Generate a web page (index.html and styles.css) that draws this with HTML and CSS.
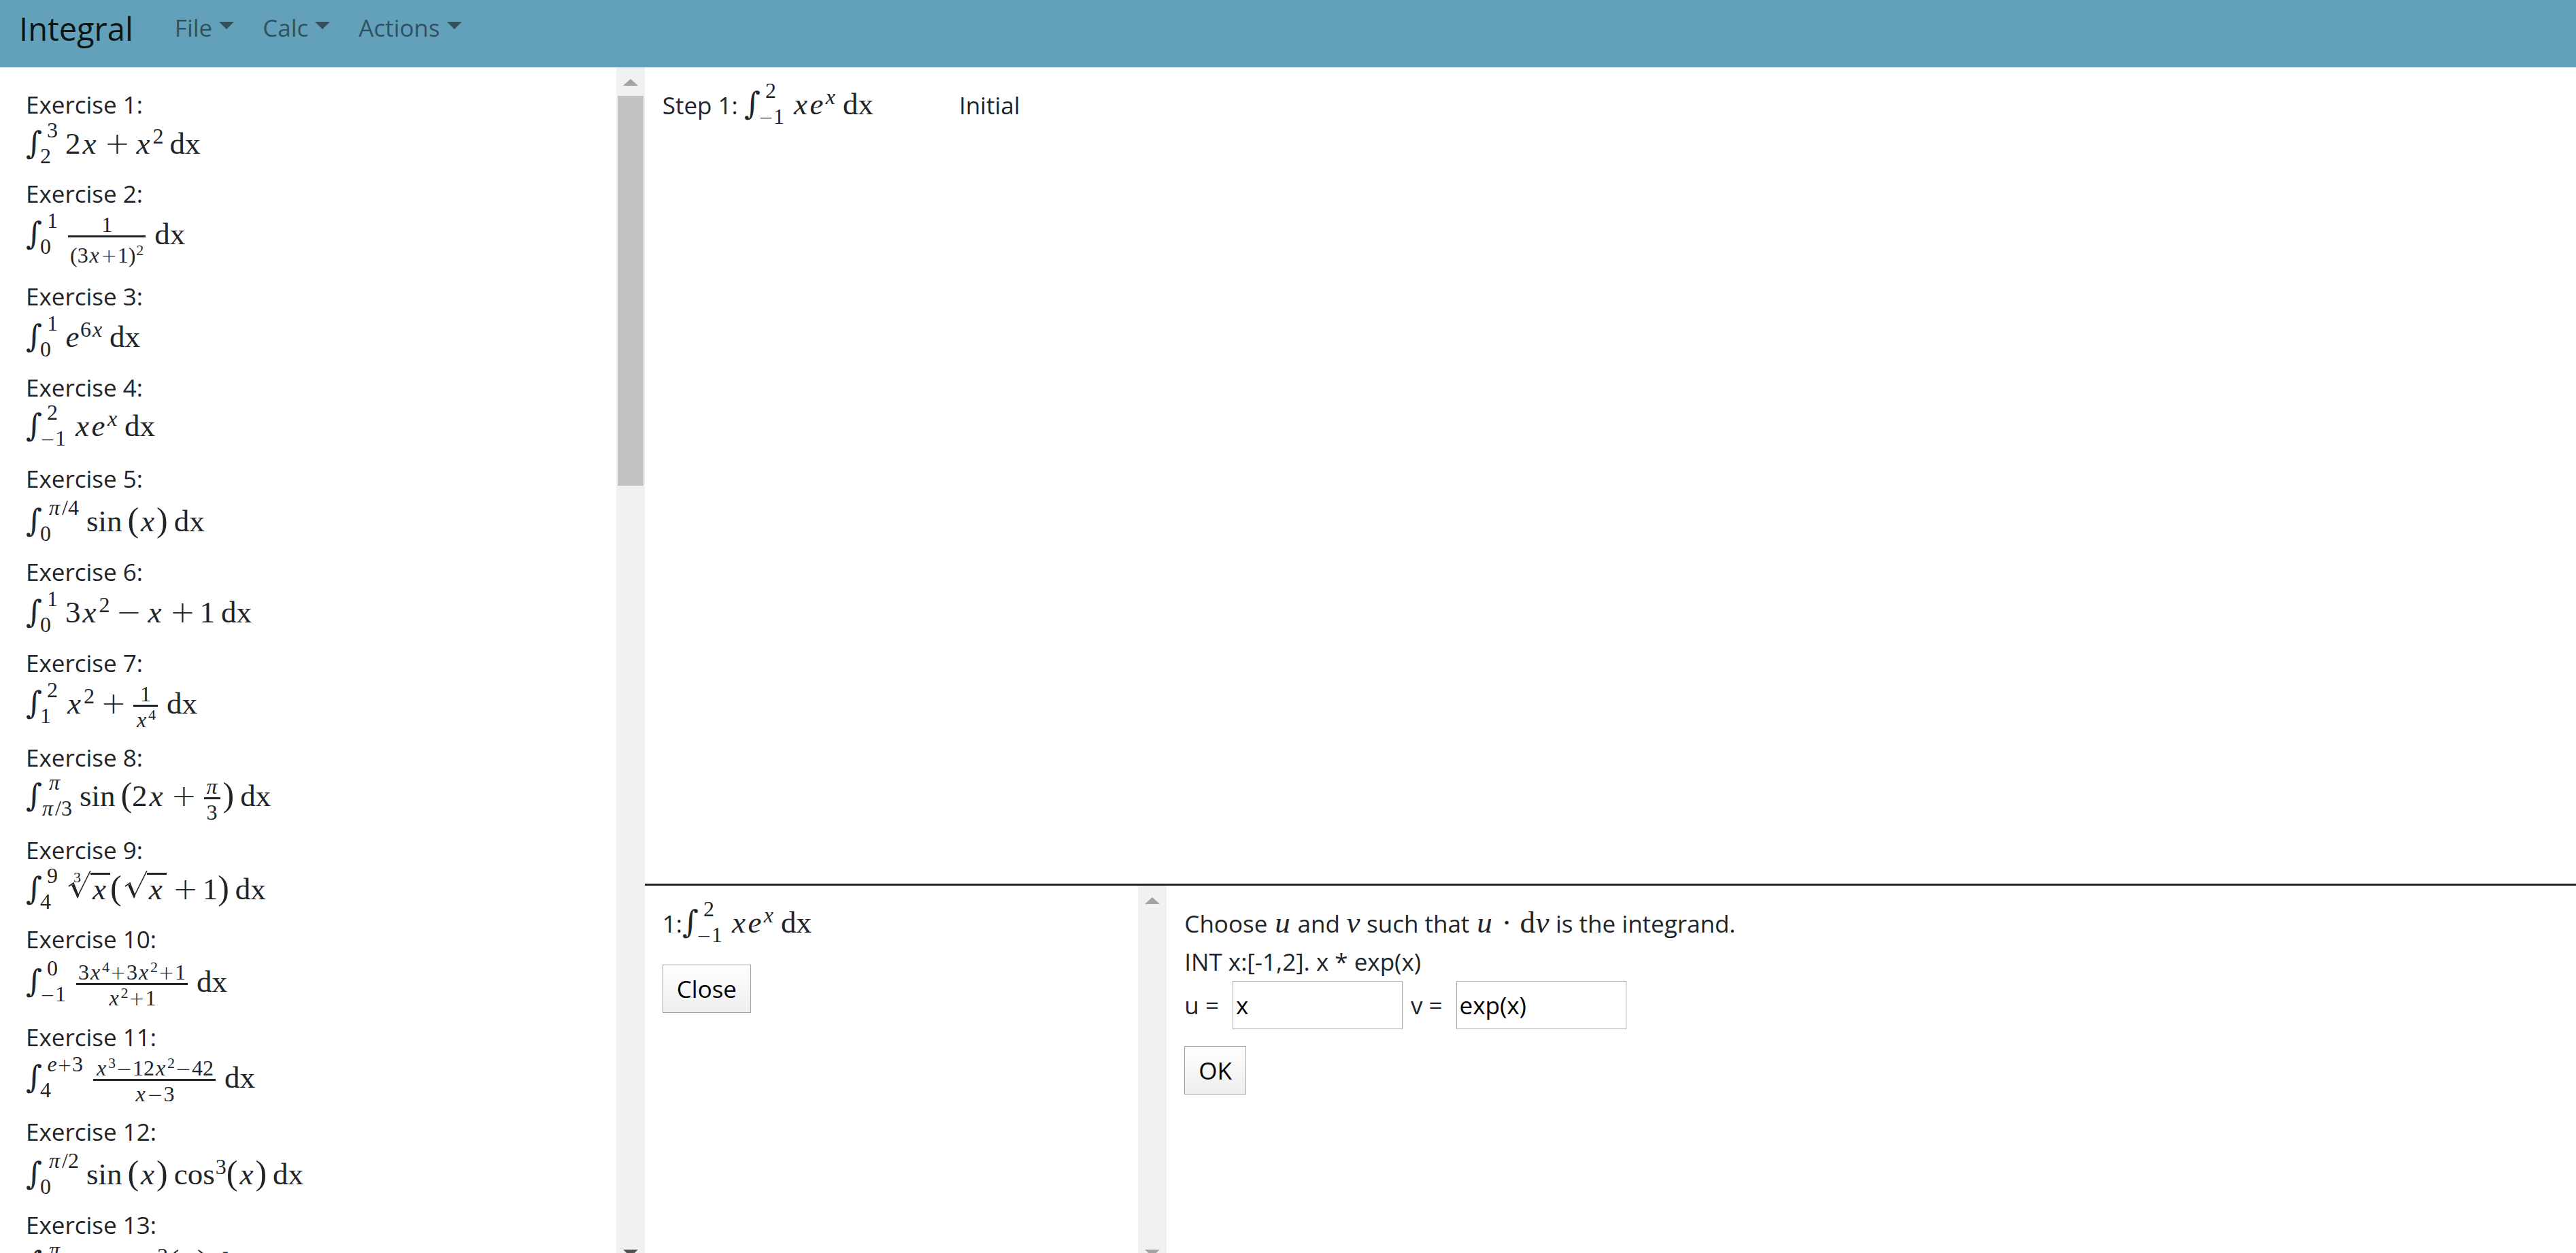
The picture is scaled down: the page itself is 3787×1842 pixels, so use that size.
FILE: index.html
```html
<!DOCTYPE html>
<html lang="en">
<head>
<meta charset="utf-8">
<title>Integral</title>
<link rel="stylesheet" href="styles.css">
</head>
<body>
<nav class="navbar">
  <a class="brand" href="#">Integral</a>
  <button class="menu" type="button">File<span class="caret"></span></button>
  <button class="menu" type="button">Calc<span class="caret"></span></button>
  <button class="menu" type="button">Actions<span class="caret"></span></button>
</nav>
<main class="workspace">
  <aside class="sidebar">
    <div class="exercises">
      <div class="exercise">Exercise 1:
        <div class="line line-s"><span class="math"><span class="int">∫</span><span class="lim"><sup>3</sup><sub>2</sub></span>2<i>x</i><b>+</b><i>x</i><span class="exp">2</span><span class="dx">dx</span></span></div>
      </div>
      <div class="exercise">Exercise 2:
        <div class="line line-xl"><span class="math"><span class="int">∫</span><span class="lim"><sup>1</sup><sub>0</sub></span><span class="frac"><span class="num">1</span><span class="den den-tall">(3<i>x</i><b>+</b>1)<span class="exp">2</span></span></span><span class="dx">dx</span></span></div>
      </div>
      <div class="exercise">Exercise 3:
        <div class="line"><span class="math"><span class="int">∫</span><span class="lim"><sup>1</sup><sub>0</sub></span><i class="e">e</i><span class="exp">6<i>x</i></span><span class="dx">dx</span></span></div>
      </div>
      <div class="exercise">Exercise 4:
        <div class="line line-high"><span class="math"><span class="int">∫</span><span class="lim"><sup>2</sup><sub><b>−</b>1</sub></span><i>x</i><i class="e">e</i><span class="exp"><i>x</i></span><span class="dx">dx</span></span></div>
      </div>
      <div class="exercise">Exercise 5:
        <div class="line line-low"><span class="math"><span class="int">∫</span><span class="lim"><sup><i>π</i>/4</sup><sub>0</sub></span><span class="fn">sin</span><span class="par">(</span><i>x</i><span class="par">)</span><span class="dx">dx</span></span></div>
      </div>
      <div class="exercise">Exercise 6:
        <div class="line"><span class="math"><span class="int">∫</span><span class="lim"><sup>1</sup><sub>0</sub></span>3<i>x</i><span class="exp">2</span><b>−</b><i>x</i><b>+</b>1<span class="dx">dx</span></span></div>
      </div>
      <div class="exercise">Exercise 7:
        <div class="line line-l"><span class="math"><span class="int">∫</span><span class="lim"><sup>2</sup><sub>1</sub></span><i>x</i><span class="exp">2</span><b>+</b><span class="frac"><span class="num">1</span><span class="den"><i>x</i><span class="exp">4</span></span></span><span class="dx">dx</span></span></div>
      </div>
      <div class="exercise">Exercise 8:
        <div class="line line-m line-high"><span class="math"><span class="int">∫</span><span class="lim"><sup><i>π</i></sup><sub><i>π</i>/3</sub></span><span class="fn">sin</span><span class="par">(</span>2<i>x</i><b>+</b><span class="frac"><span class="num"><i>π</i></span><span class="den">3</span></span><span class="par">)</span><span class="dx">dx</span></span></div>
      </div>
      <div class="exercise">Exercise 9:
        <div class="line line-s"><span class="math"><span class="int">∫</span><span class="lim"><sup>9</sup><sub>4</sub></span><span class="root"><span class="index">3</span><svg class="radical" viewBox="0 0 34 43"><path d="M1 24l7-5 7 18L33 1" fill="none" stroke="currentColor" stroke-width="1.6"/><path d="M5 22l4-1 7 17-2 4z" fill="currentColor"/></svg><span class="radicand"><i>x</i></span></span><span class="par">(</span><span class="root"><svg class="radical" viewBox="0 0 34 43"><path d="M1 24l7-5 7 18L33 1" fill="none" stroke="currentColor" stroke-width="1.6"/><path d="M5 22l4-1 7 17-2 4z" fill="currentColor"/></svg><span class="radicand"><i>x</i></span></span><b>+</b>1<span class="par">)</span><span class="dx">dx</span></span></div>
      </div>
      <div class="exercise">Exercise 10:
        <div class="line line-low line-l"><span class="math"><span class="int">∫</span><span class="lim"><sup>0</sup><sub><b>−</b>1</sub></span><span class="frac"><span class="num">3<i>x</i><span class="exp">4</span><b>+</b>3<i>x</i><span class="exp">2</span><b>+</b>1</span><span class="den"><i>x</i><span class="exp">2</span><b>+</b>1</span></span><span class="dx">dx</span></span></div>
      </div>
      <div class="exercise">Exercise 11:
        <div class="line line-l"><span class="math"><span class="int">∫</span><span class="lim"><sup><i class="e">e</i><b>+</b>3</sup><sub>4</sub></span><span class="frac"><span class="num"><i>x</i><span class="exp">3</span><b>−</b>12<i>x</i><span class="exp">2</span><b>−</b>42</span><span class="den"><i>x</i><b>−</b>3</span></span><span class="dx">dx</span></span></div>
      </div>
      <div class="exercise">Exercise 12:
        <div class="line line-low"><span class="math"><span class="int">∫</span><span class="lim"><sup><i>π</i>/2</sup><sub>0</sub></span><span class="fn">sin</span><span class="par">(</span><i>x</i><span class="par">)</span><span class="dx">cos</span><span class="exp">3</span><span class="par">(</span><i>x</i><span class="par">)</span><span class="dx">dx</span></span></div>
      </div>
      <div class="exercise">Exercise 13:
        <div class="line line-high"><span class="math"><span class="int">∫</span><span class="lim"><sup><i>π</i></sup><sub>0</sub></span>1<b>−</b>sin<span class="exp">3</span><span class="par">(</span><i>x</i><span class="par">)</span><span class="dx">dx</span></span></div>
      </div>
    </div>
    <div class="scrollbar">
      <span class="arrow up"></span>
      <span class="thumb"></span>
      <span class="arrow down active"></span>
    </div>
  </aside>
  <section class="content">
    <div class="steps">
      <span>Step 1: <span class="math"><span class="int">∫</span><span class="lim"><sup>2</sup><sub><b>−</b>1</sub></span><i>x</i><i class="e">e</i><span class="exp"><i>x</i></span><span class="dx">dx</span></span></span>
      <span>Initial</span>
    </div>
    <div class="bottom">
      <div class="current">
        <div class="current-body">
          <div class="current-line">1:<span class="math"><span class="int">∫</span><span class="lim"><sup>2</sup><sub><b>−</b>1</sub></span><i>x</i><i class="e">e</i><span class="exp"><i>x</i></span><span class="dx">dx</span></span></div>
          <button class="btn" type="button">Close</button>
        </div>
        <div class="scrollbar">
          <span class="arrow up"></span>
          <span class="arrow down"></span>
        </div>
      </div>
      <form class="dialog">
        <div>Choose <span class="math"><i>u</i></span> and <span class="math"><i class="e">v</i></span> such that <span class="math"><i>u</i><span class="dot">·</span>d<i class="e">v</i></span> is the integrand.</div>
        <div>INT x:[-1,2]. x * exp(x)</div>
        <div class="fields">
          <label for="u">u =</label><input id="u" type="text" value="x">
          <label for="v">v =</label><input id="v" type="text" value="exp(x)">
        </div>
        <button class="btn" type="button">OK</button>
      </form>
    </div>
  </section>
</main>
</body>
</html>
```
FILE: styles.css
```css
* { box-sizing: border-box; }

body {
  margin: 0;
  height: 100vh;
  display: flex;
  flex-direction: column;
  overflow: hidden;
  background: #fff;
  color: #212529;
  font: 35px/56px "Open Sans", "Noto Sans", sans-serif;
}

button, input { font: inherit; color: #000; }

/* Top bar */
.navbar {
  flex: none;
  height: 99px;
  padding: 0 28px 18px;
  display: flex;
  align-items: center;
  background: #62a1b9;
}
.brand {
  margin-right: 40px;
  padding-top: 3px;
  color: rgba(0, 0, 0, .9);
  font-size: 47px;
  text-decoration: none;
}
.menu {
  display: flex;
  align-items: center;
  gap: 10px;
  padding: 0 21px;
  border: 0;
  background: none;
  color: rgba(0, 0, 0, .5);
}
.caret {
  border: 11px solid transparent;
  border-top-color: currentColor;
  border-bottom: 0;
  margin-bottom: 6px;
}

/* Panels */
.workspace { flex: 1; min-height: 0; display: flex; }
.sidebar { flex: 0 0 calc(25% + 1px); min-width: 0; display: flex; overflow: hidden; }
.exercises { flex: 1; min-width: 0; padding: 27px 38px 0; }
.content {
  flex: 1;
  min-width: 0;
  display: grid;
  grid-template-rows: minmax(0, 1200fr) minmax(0, 543fr);
}
.steps { display: flex; align-items: baseline; gap: 126px; padding: 26px; }
.bottom { display: flex; border-top: 3px solid #212529; overflow: hidden; }
.current { flex: 0 0 calc(27% + 1px); display: flex; }
.current-body { flex: 1; padding: 26px; }
.current-line { height: 90px; }
.dialog { flex: 1; padding: 26px; }

.scrollbar {
  flex: none;
  width: 42px;
  padding: 17px 2px 0;
  display: flex;
  flex-direction: column;
  align-items: center;
  background: #f1f1f1;
}
.arrow { border: 11px solid transparent; color: #a3a3a3; }
.arrow.active { color: #505050; }
.up { border-top: 0; border-bottom: 10px solid currentColor; }
.down { margin: auto 0 -5px; border-bottom: 0; border-top: 10px solid currentColor; }
.thumb { width: 100%; height: 573px; margin-top: 15px; background: #c1c1c1; }

/* Controls */
.btn {
  height: 71px;
  padding: 0 20px;
  border: 1px solid #a3a3a3;
  background: linear-gradient(#fff, #eee);
}
.fields { display: flex; align-items: center; margin-bottom: 25px; }
.fields label { margin-right: 20px; }
.fields input + label { margin-left: 12px; }
.fields input {
  width: 250px;
  height: 71px;
  padding: 0 4px;
  border: 1px solid #a9a9a9;
  background: #fff;
}

/* Exercise formula rows */
.line { height: 78px; padding-top: 3px; white-space: nowrap; }
.line-s { height: 75px; padding-top: 1px; }
.line-low { height: 81px; padding-top: 6px; }
.line-m { height: 80px; }
.line-l { height: 83px; }
.line-low.line-l { height: 88px; }
.line-xl { height: 95px; }
.line-high { padding-top: 0; }

/* Formulas */
.math { font: 45px/56px "Liberation Serif", serif; white-space: nowrap; }
.math i { display: inline-block; width: 26px; text-align: center; }
.math i.e { width: 21px; }
.math b {
  display: inline-block;
  width: 35px;
  margin: 0 9px;
  text-align: center;
  font-family: "DejaVu Sans";
  font-weight: 200;
  line-height: 1;
}
.int { display: inline-block; width: 21px; font: 46px/46px "DejaVu Serif", serif; }
.lim {
  display: inline-grid;
  margin: -14px 11px 0 0;
  vertical-align: 24px;
  font-size: 32px;
  line-height: 38px;
}
.lim sup, .lim sub { font-size: inherit; line-height: inherit; vertical-align: baseline; }
.lim sup { padding-left: 10px; }
.exp { margin-left: 1px; font-size: 32px; line-height: 1; vertical-align: 15px; }
.dx { margin-left: 9px; }
.fn { margin-right: 8px; }
.dot { margin: 0 12px; }
.par { font-size: 50px; line-height: 1; }

.num i, .den i, .exp i { width: 18px; }
.lim i { width: 22px; }
.lim i.e { width: 15px; }
.num b, .den b { width: 25px; margin: 0; font-size: 28px; }
.lim b { width: 22px; margin: 0; font-size: 26px; }

.frac {
  display: inline-grid;
  margin: -4px 4px 0;
  vertical-align: 18px;
  text-align: center;
  font-size: 32px;
  line-height: 32px;
}
.num { padding: 0 3px; border-bottom: 3px solid; }
.den { line-height: 38px; padding: 0 3px; }
.den-tall { padding-top: 7px; }
.num .exp, .den .exp { font-size: 22px; vertical-align: 11px; }

.root { display: inline-flex; align-items: baseline; margin-left: 4px; line-height: 42px; }
.index { align-self: flex-start; width: 12px; margin: 0 -20px 0 8px; font-size: 22px; line-height: 22px; }
.radical { width: 34px; height: 43px; margin-bottom: -9px; }
.radicand { border-top: 3px solid; margin-left: -1px; padding-right: 3px; }
```
